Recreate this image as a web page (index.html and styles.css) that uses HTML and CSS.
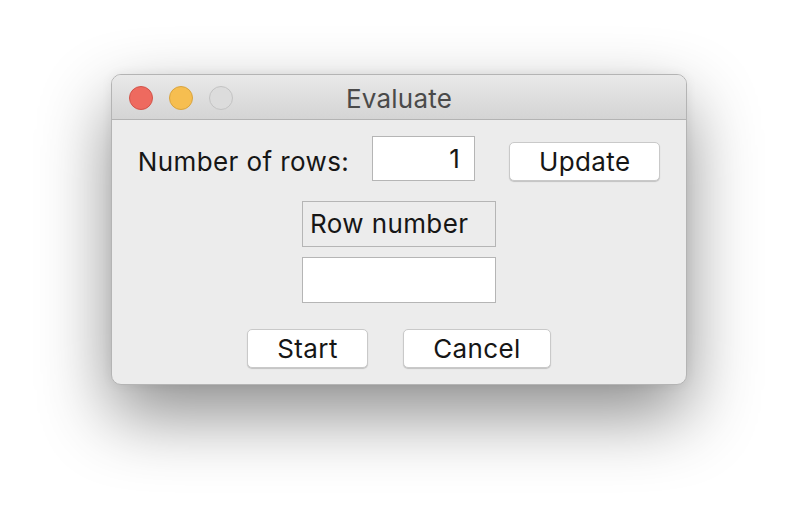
FILE: index.html
```html
<!DOCTYPE html>
<html>
<head>
<meta charset="utf-8">
<link rel="stylesheet" href="styles.css">
</head>
<body>
<div class="window">
  <div class="titlebar">
    <div class="lights">
      <span class="light red"></span>
      <span class="light yellow"></span>
      <span class="light gray"></span>
    </div>
    <div class="title">Evaluate</div>
  </div>
  <div class="content">
    <div class="row row-top">
      <span class="label">Number of rows:</span>
      <div class="field field-num">1</div>
      <div class="btn btn-update">Update</div>
    </div>
    <div class="labelbox">Row number</div>
    <div class="field field-wide"></div>
    <div class="row row-buttons">
      <div class="btn btn-start">Start</div>
      <div class="btn btn-cancel">Cancel</div>
    </div>
  </div>
</div>
</body>
</html>
```

FILE: styles.css
```css
html, body {
  margin: 0;
  padding: 0;
  background: #ffffff;
}
body {
  width: 798px;
  height: 532px;
  overflow: hidden;
  padding-top: 74px;
  box-sizing: border-box;
  font-family: "Inter", "Liberation Sans", sans-serif;
  color: #161616;
  letter-spacing: 0.4px;
}
.window {
  width: 576px;
  height: 311px;
  margin: 0 auto;
  box-sizing: border-box;
  border: 1px solid #b4b4b4;
  border-radius: 10px;
  background: #ececec;
  box-shadow: 0 30px 70px rgba(0, 0, 0, 0.45), 0 0 12px rgba(0, 0, 0, 0.06);
  overflow: hidden;
  display: flex;
  flex-direction: column;
}
.titlebar {
  position: relative;
  height: 44px;
  flex: none;
  background: linear-gradient(#e9e9e9, #d4d4d4);
  border-bottom: 1px solid #b3b3b3;
  display: flex;
  align-items: center;
  justify-content: center;
}
.lights {
  position: absolute;
  left: 17px;
  top: 11px;
  display: flex;
  gap: 16px;
}
.light {
  width: 22px;
  height: 22px;
  border-radius: 50%;
  border: 1px solid transparent;
}
.red { background: #ee6a5f; border-color: #d2544a; }
.yellow { background: #f6be50; border-color: #d9a43f; }
.gray { background: #dcdcdc; border-color: #c3c3c3; }
.title {
  font-size: 26px;
  color: #4a4a4a;
  padding-top: 2px;
  letter-spacing: 0.2px;
}
.content {
  flex: 1;
  display: flex;
  flex-direction: column;
  align-items: center;
  padding-top: 16px;
}
.row {
  display: flex;
  align-items: center;
}
.label {
  font-size: 26px;
  margin-right: 23px;
  padding-top: 5px;
}
.field {
  background: #ffffff;
  border: 1px solid #b5b5b5;
  box-sizing: border-box;
  font-size: 26px;
}
.field-num {
  width: 103px;
  height: 45px;
  text-align: right;
  padding-right: 14px;
  line-height: 43px;
}
.btn {
  background: #ffffff;
  border: 1px solid #c9c9c9;
  border-radius: 5px;
  box-shadow: 0 1px 1px rgba(0, 0, 0, 0.18);
  box-sizing: border-box;
  font-size: 26px;
  text-align: center;
  height: 39px;
  line-height: 37px;
}
.btn-update {
  width: 151px;
  margin-left: 34px;
  margin-top: 6px;
}
.labelbox {
  margin-top: 20px;
  width: 194px;
  height: 46px;
  box-sizing: border-box;
  border: 1px solid #b5b5b5;
  font-size: 26px;
  line-height: 44px;
  padding-left: 7px;
}
.field-wide {
  margin-top: 10px;
  width: 194px;
  height: 46px;
}
.row-buttons {
  margin-top: 26px;
  gap: 35px;
}
.btn-start { width: 121px; }
.btn-cancel { width: 148px; }
```
